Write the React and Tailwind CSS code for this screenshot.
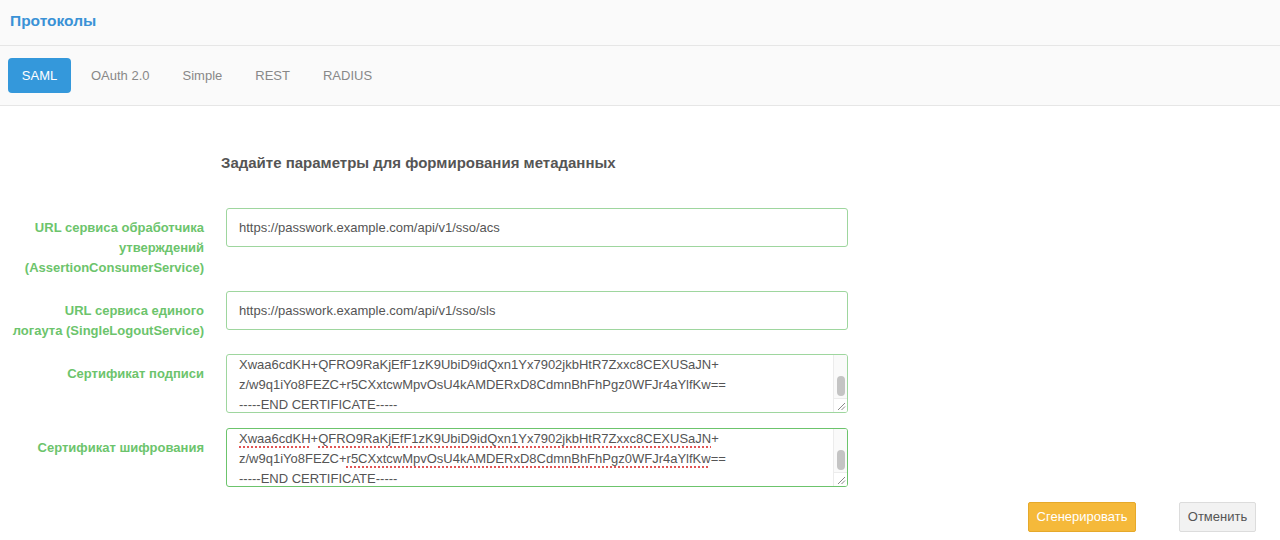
import React from "react";

const font = { fontFamily: '"Liberation Sans", Arial, Helvetica, sans-serif' };

function Label({ children }) {
  return (
    <div className="w-[204px] shrink-0 pt-[10px] text-right text-[13px] font-bold leading-[20px] text-[#6cc46c]">
      {children}
    </div>
  );
}

function Input({ value }) {
  return (
    <div className="flex h-[39px] w-[622px] items-center rounded-[3px] border border-[#9ed69e] bg-white pl-[12px] text-[13px] text-[#555]">
      {value}
    </div>
  );
}

function Sq({ children }) {
  return (
    <span className="underline decoration-[#e05555] decoration-dotted decoration-[1.5px] underline-offset-[3px]">
      {children}
    </span>
  );
}

function FakeTextarea({ focused, spell }) {
  return (
    <div
      className={
        "flex h-[59px] w-[622px] overflow-hidden rounded-[3px] border bg-white " +
        (focused ? "border-[#6cc46c]" : "border-[#9ed69e]")
      }
    >
      <div className="flex-1 overflow-hidden pl-[12px] text-[13px] leading-[20px] text-[#555]">
        {spell ? (
          <>
            <div className="whitespace-nowrap">
              <Sq>Xwaa6cdKH</Sq>+<Sq>QFRO9RaKjEfF1zK9UbiD9idQxn1Yx7902jkbHtR7Zxxc8CEXUSaJN</Sq>+
            </div>
            <div className="whitespace-nowrap">
              z/w9q1iYo8FEZC+<Sq>r5CXxtcwMpvOsU4kAMDERxD8CdmnBhFhPgz0WFJr4aYlfKw</Sq>==
            </div>
          </>
        ) : (
          <>
            <div className="whitespace-nowrap">
              Xwaa6cdKH+QFRO9RaKjEfF1zK9UbiD9idQxn1Yx7902jkbHtR7Zxxc8CEXUSaJN+
            </div>
            <div className="whitespace-nowrap">
              z/w9q1iYo8FEZC+r5CXxtcwMpvOsU4kAMDERxD8CdmnBhFhPgz0WFJr4aYlfKw==
            </div>
          </>
        )}
        <div className="whitespace-nowrap">-----END CERTIFICATE-----</div>
      </div>
      <div className="flex w-[14px] shrink-0 flex-col border-l border-[#ececec] bg-[#fafafa]">
        <div className="flex flex-1 items-end justify-center pb-[2px]">
          <div className="h-[20px] w-[8px] rounded-full bg-[#c4c4c4]" />
        </div>
        <div className="flex h-[14px] items-end justify-end border-t border-[#ececec] bg-white pb-[1px] pr-[1px]">
          <svg width="9" height="9" viewBox="0 0 9 9">
            <path d="M1 8 L8 1 M4.5 8 L8 4.5" stroke="#888" strokeWidth="1" />
          </svg>
        </div>
      </div>
    </div>
  );
}

export default function App() {
  const tabs = ["OAuth 2.0", "Simple", "REST", "RADIUS"];
  return (
    <div className="min-h-[540px] w-full bg-white" style={font}>
      <div className="flex h-[46px] items-center border-b border-[#e6e6e6] bg-[#fafafa] pb-[3px] pl-[10px]">
        <span className="text-[15.5px] font-bold text-[#3a92d6]">Протоколы</span>
      </div>
      <div className="flex h-[60px] items-center gap-[3px] border-b border-[#e6e6e6] bg-[#fafafa] pl-[8px]">
        <div className="mr-[2px] flex h-[35px] w-[63px] items-center justify-center rounded-[4px] bg-[#3498db] text-[13px] text-white">
          SAML
        </div>
        {tabs.map((t) => (
          <div key={t} className="flex h-[35px] items-center px-[15px] text-[13px] text-[#888]">
            {t}
          </div>
        ))}
      </div>
      <div className="pt-[47px]">
        <div className="ml-[221px] text-[15px] font-bold leading-[20px] text-[#555]">
          Задайте параметры для формирования метаданных
        </div>
        <div className="mt-[35px] flex flex-col">
          <div className="mb-[13px] flex gap-[22px]">
            <Label>
              URL сервиса обработчика
              <br />
              утверждений
              <br />
              (AssertionConsumerService)
            </Label>
            <Input value="https://passwork.example.com/api/v1/sso/acs" />
          </div>
          <div className="mb-[13px] flex gap-[22px]">
            <Label>
              URL сервиса единого
              <br />
              логаута (SingleLogoutService)
            </Label>
            <Input value="https://passwork.example.com/api/v1/sso/sls" />
          </div>
          <div className="mb-[15px] flex gap-[22px]">
            <Label>Сертификат подписи</Label>
            <FakeTextarea />
          </div>
          <div className="flex gap-[22px]">
            <Label>Сертификат шифрования</Label>
            <FakeTextarea focused spell />
          </div>
        </div>
        <div className="mt-[15px] flex justify-end gap-[43px] pr-[24px]">
          <button className="h-[30px] w-[108px] rounded-[2px] border border-[#e6a92a] bg-[#f5b93a] text-[13px] text-white">
            Сгенерировать
          </button>
          <button className="h-[30px] w-[77px] rounded-[2px] border border-[#dcdcdc] bg-[#f2f2f2] text-[13px] text-[#555]">
            Отменить
          </button>
        </div>
      </div>
    </div>
  );
}
